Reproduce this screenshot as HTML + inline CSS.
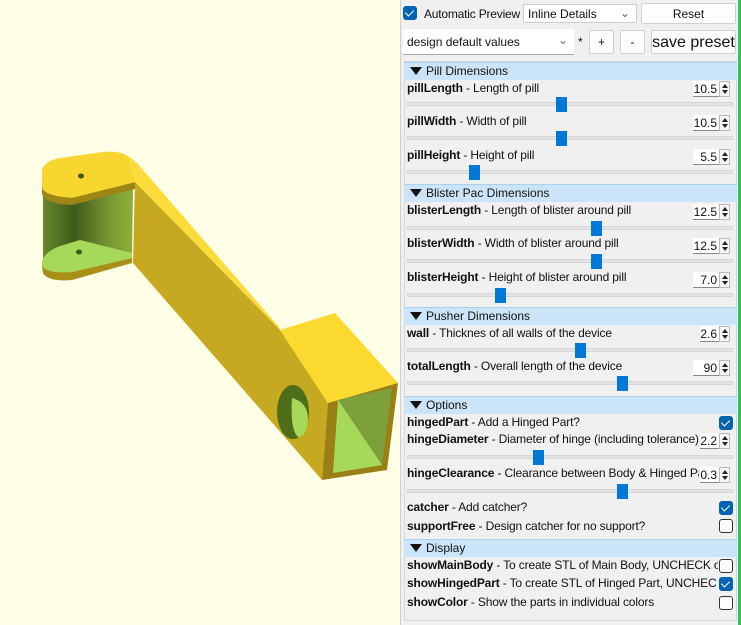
<!DOCTYPE html>
<html><head><meta charset="utf-8"><style>
*{box-sizing:border-box;margin:0;padding:0}
body{width:741px;height:625px;overflow:hidden;background:#fffee6;font-family:"Liberation Sans",Arial,sans-serif;font-size:12px;color:#111;position:relative}
.a{position:absolute}
#panel{left:400px;top:0;width:341px;height:625px;background:#f0f0f0;border-left:1px solid #d0d0d0}
#gl{left:738px;top:0;width:3px;height:625px;background:#2fc35a}
.hdr{left:404px;width:333px;height:18px;background:#cce4f7;border-top:1px solid #a9d0ef;padding-left:6px;line-height:17px}
.hdr:before{content:"";display:inline-block;width:0;height:0;border-left:6px solid transparent;border-right:6px solid transparent;border-top:8px solid #111;margin-right:4px;vertical-align:0}
.lb{left:407px;white-space:nowrap;line-height:14px;letter-spacing:-0.15px}
.lb b{font-weight:bold}
.box{left:693px;width:26px;height:16px;background:#fff;border-bottom:1px solid #888;text-align:right;padding-right:2px;line-height:17px;font-size:12px}
.spin{width:11px;height:16px;background:#f5f5f5;border:1px solid #bbb}
.spin:before{content:"";position:absolute;left:2px;top:2px;border-left:3px solid transparent;border-right:3px solid transparent;border-bottom:4px solid #222}
.spin:after{content:"";position:absolute;left:2px;top:8px;border-left:3px solid transparent;border-right:3px solid transparent;border-top:4px solid #222}
.tr{left:407px;width:326px;height:4px;background:#e3e3e3;border:1px solid #d6d6d6}
.th{width:11px;height:15px;background:#0078d7}
.cb{left:719px;width:14px;height:14px;border:1px solid #333;border-radius:3px;background:#fff}
.cb.on{background:#0063b1;border-color:#0063b1}
.cb.on:after{content:"";position:absolute;left:3px;top:1px;width:4px;height:7px;border-right:1.5px solid #fff;border-bottom:1.5px solid #fff;transform:rotate(45deg)}
.btn{background:#fdfdfd;border:1px solid #d0d0d0;text-align:center;border-radius:2px}
</style></head><body>
<svg class="a" style="left:0;top:0" width="400" height="625">
<defs><linearGradient id="ig" x1="0" x2="1"><stop offset="0" stop-color="#6a8a2a"/><stop offset=".35" stop-color="#3e5a1a"/><stop offset=".75" stop-color="#7a9a34"/><stop offset="1" stop-color="#8bb03a"/></linearGradient></defs>
<polygon points="43,195 133,186 132,257 43,262" fill="url(#ig)"/>
<path d="M42,262 Q44,252 60,246 L80,240 L132,253 L132,258 L72,272 Q48,274 42,268 Z" fill="#a6d95a"/>
<path d="M42,266 Q48,274 72,272 L132,258 L132,263 L72,280 Q48,282 43,273 Z" fill="#a89018"/>
<path d="M42,187 Q44,196 72,198 L135,182 L135,189 L72,205 Q46,204 42,194 Z" fill="#9c8616"/>
<path d="M42,187 L42,170 Q44,161 60,158 L103,152 Q122,150 130,158 L135,182 L72,198 Q44,196 42,187 Z" fill="#f7d630"/>
<polygon points="128,156 137,163 279,327 280,330 135,182" fill="#fbdc3a"/>
<polygon points="135,182 280,330 328,403 322,480 133,263" fill="#c6a921"/>
<polygon points="280,330 335,313 398,383 328,403" fill="#fbd92e"/>
<polygon points="328,403 398,383 387,470 322,480" fill="#9a8014"/>
<polygon points="338,400 392,388 382,465 333,473" fill="#7ea03a"/>
<polygon points="338,400 382,465 333,473" fill="#a6d95a"/>
<ellipse cx="293" cy="412" rx="16" ry="27" fill="#4e6e1a"/>
<path d="M292,398 Q308,402 308,420 Q306,438 298,437 Q290,430 292,398 Z" fill="#a6d95a"/>
<ellipse cx="81" cy="176" rx="3" ry="2.5" fill="#3e5a1a"/>
<ellipse cx="79" cy="252" rx="3" ry="2.5" fill="#3e5a1a"/>
</svg>
<div class="a" id="panel"></div><div class="a" id="gl"></div>
<div class="a cb on" style="left:403px;top:6px"></div>
<div class="a" style="left:424px;top:7px;letter-spacing:-0.2px">Automatic Preview</div>
<div class="a" style="left:523px;top:4px;width:114px;height:19px;background:#fff;border:1px solid #ccc;padding:2px 4px">Inline Details<span class="a" style="right:6px;top:1px;color:#666">⌄</span></div>
<div class="a btn" style="left:641px;top:3px;width:95px;height:21px;line-height:20px">Reset</div>
<div class="a" style="left:403px;top:29px;width:171px;height:26px;background:#fff;border-bottom:1px solid #aaa;padding:6px 4px">design default values<span class="a" style="right:6px;top:4px;color:#666">⌄</span></div>
<div class="a" style="left:578px;top:35px">*</div>
<div class="a btn" style="left:589px;top:30px;width:25px;height:24px;line-height:23px">+</div>
<div class="a btn" style="left:620px;top:30px;width:25px;height:24px;line-height:23px">-</div>
<div class="a btn" style="left:651px;top:30px;width:85px;height:24px;line-height:23px;font-size:16px">save preset</div>
<div class="a" style="left:404px;top:61px;width:333px;height:560px;border:1px solid #d8d8d8"></div>

<div class="a hdr" style="top:62px">Pill Dimensions</div>
<div class="a lb" style="top:81px"><b>pillLength</b> - Length of pill</div>
<div class="a box" style="top:81px">10.5</div><div class="a spin" style="left:719px;top:81px"></div>
<div class="a tr" style="top:102px"></div><div class="a th" style="left:556px;top:97px"></div>
<div class="a lb" style="top:114px"><b>pillWidth</b> - Width of pill</div>
<div class="a box" style="top:115px">10.5</div><div class="a spin" style="left:719px;top:115px"></div>
<div class="a tr" style="top:136px"></div><div class="a th" style="left:556px;top:131px"></div>
<div class="a lb" style="top:148px"><b>pillHeight</b> - Height of pill</div>
<div class="a box" style="top:149px">5.5</div><div class="a spin" style="left:719px;top:149px"></div>
<div class="a tr" style="top:170px"></div><div class="a th" style="left:469px;top:165px"></div>

<div class="a hdr" style="top:184px">Blister Pac Dimensions</div>
<div class="a lb" style="top:203px"><b>blisterLength</b> - Length of blister around pill</div>
<div class="a box" style="top:204px">12.5</div><div class="a spin" style="left:719px;top:204px"></div>
<div class="a tr" style="top:226px"></div><div class="a th" style="left:591px;top:221px"></div>
<div class="a lb" style="top:236px"><b>blisterWidth</b> - Width of blister around pill</div>
<div class="a box" style="top:238px">12.5</div><div class="a spin" style="left:719px;top:238px"></div>
<div class="a tr" style="top:259px"></div><div class="a th" style="left:591px;top:254px"></div>
<div class="a lb" style="top:270px"><b>blisterHeight</b> - Height of blister around pill</div>
<div class="a box" style="top:272px">7.0</div><div class="a spin" style="left:719px;top:272px"></div>
<div class="a tr" style="top:293px"></div><div class="a th" style="left:495px;top:288px"></div>

<div class="a hdr" style="top:307px">Pusher Dimensions</div>
<div class="a lb" style="top:326px"><b>wall</b> - Thicknes of all walls of the device</div>
<div class="a box" style="top:326px;left:700px;width:19px">2.6</div><div class="a spin" style="left:719px;top:326px"></div>
<div class="a tr" style="top:348px"></div><div class="a th" style="left:575px;top:343px"></div>
<div class="a lb" style="top:359px"><b>totalLength</b> - Overall length of the device</div>
<div class="a box" style="top:360px">90</div><div class="a spin" style="left:719px;top:360px"></div>
<div class="a tr" style="top:381px"></div><div class="a th" style="left:617px;top:376px"></div>

<div class="a hdr" style="top:396px">Options</div>
<div class="a lb" style="top:415px"><b>hingedPart</b> - Add a Hinged Part?</div>
<div class="a cb on" style="top:416px"></div>
<div class="a lb" style="top:432px;width:292px;overflow:hidden"><b>hingeDiameter</b> - Diameter of hinge (including tolerance)</div>
<div class="a box" style="top:433px;left:700px;width:19px">2.2</div><div class="a spin" style="left:719px;top:433px"></div>
<div class="a tr" style="top:455px"></div><div class="a th" style="left:533px;top:450px"></div>
<div class="a lb" style="top:466px;width:292px;overflow:hidden"><b>hingeClearance</b> - Clearance between Body &amp; Hinged Part</div>
<div class="a box" style="top:467px;left:700px;width:19px">0.3</div><div class="a spin" style="left:719px;top:467px"></div>
<div class="a tr" style="top:489px"></div><div class="a th" style="left:617px;top:484px"></div>
<div class="a lb" style="top:500px"><b>catcher</b> - Add catcher?</div>
<div class="a cb on" style="top:501px"></div>
<div class="a lb" style="top:519px"><b>supportFree</b> - Design catcher for no support?</div>
<div class="a cb" style="top:519px"></div>

<div class="a hdr" style="top:539px">Display</div>
<div class="a lb" style="top:558px;width:311px;overflow:hidden"><b>showMainBody</b> - To create STL of Main Body, UNCHECK other</div>
<div class="a cb" style="top:559px"></div>
<div class="a lb" style="top:576px;width:309px;overflow:hidden"><b>showHingedPart</b> - To create STL of Hinged Part, UNCHECK other</div>
<div class="a cb on" style="top:577px"></div>
<div class="a lb" style="top:595px"><b>showColor</b> - Show the parts in individual colors</div>
<div class="a cb" style="top:596px"></div>
</body></html>
